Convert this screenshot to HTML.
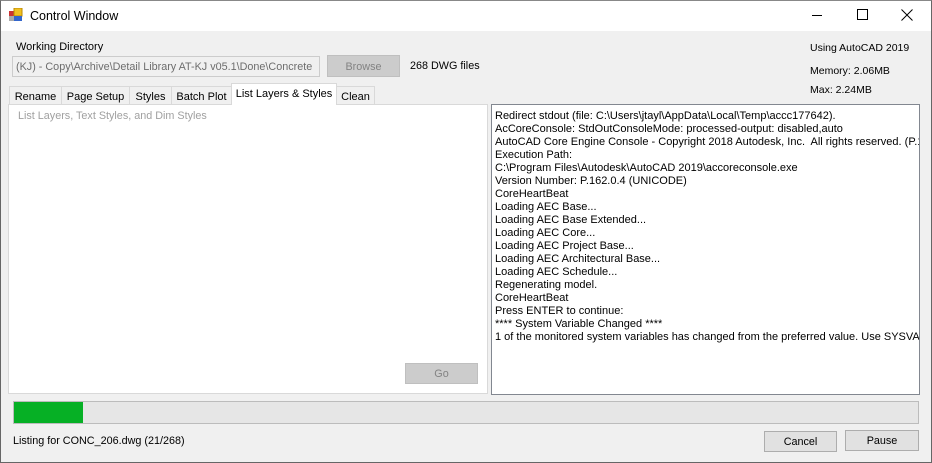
<!DOCTYPE html>
<html><head><style>
*{box-sizing:border-box;margin:0;padding:0}
body{width:932px;height:463px;overflow:hidden;font-family:"Liberation Sans",sans-serif;font-size:10.8px;color:#000;background:#f0f0f0;position:relative}
.win{position:absolute;left:0;top:0;width:932px;height:463px;border:1px solid #666;border-top-color:#888;z-index:5;pointer-events:none}
.title{position:absolute;left:0;top:0;width:932px;height:31px;background:#fff}
.a{position:absolute;white-space:nowrap}
.btn{position:absolute;border:1px solid #adadad;background:#e1e1e1;text-align:center}
.tab{position:absolute;top:86px;height:18px;border:1px solid #d9d9d9;border-bottom:none;background:#f0f0f0;padding:4px 0 0;text-align:center;white-space:nowrap;font-size:11px}
pre{font-family:"Liberation Sans",sans-serif;font-size:11px;line-height:13px}
</style></head><body>
<div class="title">
<svg class="a" style="left:9px;top:8px" width="15" height="14" viewBox="0 0 15 14"><rect x="0" y="3" width="6" height="5" fill="#c33"/><rect x="5" y="0" width="8" height="8" fill="#f0c020" stroke="#b80" stroke-width="1"/><rect x="5" y="8" width="8" height="5" fill="#36c"/><rect x="0" y="8" width="5" height="5" fill="#aaa"/></svg>
<div class="a" style="left:30px;top:9px;font-size:12.5px">Control Window</div>
<div class="a" style="left:812px;top:15px;width:10px;height:1px;background:#000"></div>
<div class="a" style="left:857px;top:9px;width:11px;height:11px;border:1px solid #000"></div>
<svg class="a" style="left:901px;top:9px" width="12" height="12"><path d="M0.5 0.5L11.5 11.5M11.5 0.5L0.5 11.5" stroke="#000" stroke-width="1"/></svg>
</div>
<div class="a" style="left:16px;top:41px;font-size:11px">Working Directory</div>
<div class="a" style="left:12px;top:56px;width:308px;height:21px;border:1px solid #ccc;background:#f0f0f0;color:#6d6d6d;padding:4px 0 0 3px;overflow:hidden">(KJ) - Copy\Archive\Detail Library AT-KJ v05.1\Done\Concrete</div>
<div class="btn" style="left:327px;top:55px;width:73px;height:22px;background:#ccc;border-color:#bfbfbf;color:#838383;padding-top:5px">Browse</div>
<div class="a" style="left:410px;top:60px">268 DWG files</div>
<div class="a" style="left:810px;top:42px;font-size:10.5px">Using AutoCAD 2019</div>
<div class="a" style="left:810px;top:65px;font-size:10.5px">Memory: 2.06MB</div>
<div class="a" style="left:810px;top:84px;font-size:10.5px">Max: 2.24MB</div>
<div class="tab" style="left:9px;width:53px">Rename</div>
<div class="tab" style="left:61px;width:69px">Page Setup</div>
<div class="tab" style="left:129px;width:43px">Styles</div>
<div class="tab" style="left:171px;width:61px">Batch Plot</div>
<div class="tab" style="left:231px;width:106px;top:83px;height:22px;background:#fff;z-index:2;padding-top:4px">List Layers &amp; Styles</div>
<div class="tab" style="left:336px;width:39px">Clean</div>
<div class="a" style="left:8px;top:104px;width:480px;height:290px;background:#fff;border:1px solid #d9d9d9"></div>
<div class="a" style="left:18px;top:110px;color:#a0a0a0">List Layers, Text Styles, and Dim Styles</div>
<div class="btn" style="left:405px;top:363px;width:73px;height:21px;background:#ccc;border-color:#bfbfbf;color:#838383;padding-top:4px">Go</div>
<div class="a" style="left:491px;top:104px;width:429px;height:291px;background:#fff;border:1px solid #828790;overflow:hidden;padding:5px 0 0 3px">
<pre>Redirect stdout (file: C:\Users\jtayl\AppData\Local\Temp\accc177642).
AcCoreConsole: StdOutConsoleMode: processed-output: disabled,auto
AutoCAD Core Engine Console - Copyright 2018 Autodesk, Inc.  All rights reserved. (P.162.0.0)
Execution Path:
C:\Program Files\Autodesk\AutoCAD 2019\accoreconsole.exe
Version Number: P.162.0.4 (UNICODE)
CoreHeartBeat
Loading AEC Base...
Loading AEC Base Extended...
Loading AEC Core...
Loading AEC Project Base...
Loading AEC Architectural Base...
Loading AEC Schedule...
Regenerating model.
CoreHeartBeat
Press ENTER to continue:
**** System Variable Changed ****
1 of the monitored system variables has changed from the preferred value. Use SYSVARMONITOR</pre></div>
<div class="a" style="left:13px;top:401px;width:906px;height:23px;background:#e6e6e6;border:1px solid #bcbcbc"><div style="position:absolute;left:0;top:0;width:69px;height:21px;background:#06b025"></div></div>
<div class="a" style="left:13px;top:435px">Listing for CONC_206.dwg (21/268)</div>
<div class="btn" style="left:764px;top:431px;width:73px;height:21px;padding-top:4px">Cancel</div>
<div class="btn" style="left:845px;top:430px;width:74px;height:21px;padding-top:4px">Pause</div>
<div class="win"></div>
</body></html>
